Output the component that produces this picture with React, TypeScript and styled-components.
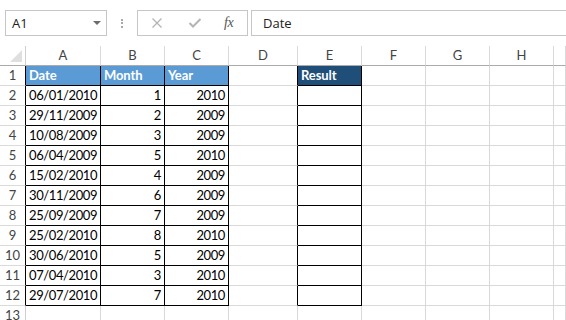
import React from "react";
import styled, { createGlobalStyle } from "styled-components";

const Global = createGlobalStyle`
  html, body { margin: 0; padding: 0; background: #ffffff; }
  body { width: 566px; height: 320px; overflow: hidden; }
  * { box-sizing: border-box; }
`;

const Page = styled.div`
  width: 566px;
  height: 320px;
  overflow: hidden;
  background: #fff;
  display: flex;
  flex-direction: column;
`;

const FormulaBar = styled.div`
  flex: 0 0 46px;
  height: 46px;
  padding: 10px 0 10px 5px;
  display: flex;
  align-items: stretch;
  font-family: "Open Sans", "Noto Sans", sans-serif;
  font-size: 13px;
  color: #222;
`;

const NameBox = styled.div`
  width: 102px;
  border: 1px solid #c6c6c6;
  display: flex;
  align-items: center;
  justify-content: space-between;
  padding: 0 5px 0 6px;
`;

const DropArrow = styled.span`
  width: 0;
  height: 0;
  border-left: 4px solid transparent;
  border-right: 4px solid transparent;
  border-top: 4px solid #6d6d6d;
`;

const Grip = styled.div`
  width: 30px;
  display: flex;
  flex-direction: column;
  align-items: center;
  justify-content: center;
  gap: 1.5px;
`;

const GripDot = styled.span`
  width: 2px;
  height: 2px;
  background: #a8a8a8;
`;

const ButtonBox = styled.div`
  width: 111px;
  border: 1px solid #c6c6c6;
  display: flex;
  align-items: center;
  padding: 0 0 0 13px;
`;

const IconSlot = styled.span<{ $w: number }>`
  width: ${(p) => p.$w}px;
  display: flex;
  align-items: center;
  justify-content: flex-start;
`;

const Fx = styled.span`
  font-family: "Liberation Serif", serif;
  font-style: italic;
  font-size: 14px;
  color: #555;
  letter-spacing: -0.5px;
`;

const FormulaInput = styled.div`
  flex: 1;
  margin-left: 3px;
  border-top: 1px solid #c6c6c6;
  border-bottom: 1px solid #c6c6c6;
  border-left: 1px solid #c6c6c6;
  display: flex;
  align-items: center;
  padding-left: 11px;
`;

const Sheet = styled.div`
  flex: 0 0 auto;
  display: grid;
  grid-template-columns: 26px 75px 64px 64px 69px 64px 64px 64px 64px 1fr;
  grid-auto-rows: 20px;
  font-family: Lato, "Open Sans", sans-serif;
  font-size: 13px;
  line-height: 19px;
`;

const Corner = styled.div`
  border-right: 1px solid #d0d0d0;
  border-bottom: 1px solid #ababab;
  display: flex;
  align-items: flex-end;
  justify-content: flex-end;
  padding: 0 3px 3px 0;
`;

const CornerTriangle = styled.span`
  width: 0;
  height: 0;
  border-left: 12px solid transparent;
  border-bottom: 12px solid #dfdfdf;
`;

const ColHead = styled.div`
  border-right: 1px solid #dadada;
  border-bottom: 1px solid #ababab;
  color: #444;
  text-align: center;
`;

const RowHead = styled.div<{ $edge: string }>`
  border-right: 1px solid ${(p) => p.$edge};
  border-bottom: 1px solid #dadada;
  color: #444;
  text-align: center;
`;

const Cell = styled.div<{
  $right: string;
  $bottom: string;
  $bg?: string;
  $align?: "left" | "right";
  $bold?: boolean;
}>`
  border-right: 1px solid ${(p) => p.$right};
  border-bottom: 1px solid ${(p) => p.$bottom};
  background: ${(p) => p.$bg || "transparent"};
  color: ${(p) => (p.$bg ? "#fff" : "#000")};
  font-weight: ${(p) => (p.$bold ? 700 : 400)};
  text-align: ${(p) => p.$align || "left"};
  letter-spacing: ${(p) => (p.$bold ? "-0.1px" : "-0.4px")};
  padding: 0 3px 0 3px;
  white-space: nowrap;
  overflow: hidden;
`;

const GRID = "#d9d9d9";
const BLACK = "#000";
const BLUE = "#5b9bd5";
const DARK = "#1f4e78";

const rows: [string, string, string][] = [
  ["06/01/2010", "1", "2010"],
  ["29/11/2009", "2", "2009"],
  ["10/08/2009", "3", "2009"],
  ["06/04/2009", "5", "2010"],
  ["15/02/2010", "4", "2009"],
  ["30/11/2009", "6", "2009"],
  ["25/09/2009", "7", "2009"],
  ["25/02/2010", "8", "2010"],
  ["30/06/2010", "5", "2009"],
  ["07/04/2010", "3", "2010"],
  ["29/07/2010", "7", "2010"],
];

const cols = ["A", "B", "C", "D", "E", "F", "G", "H", ""];

const XIcon = () => (
  <svg width="12" height="12" viewBox="0 0 12 12">
    <path d="M1.5 1.5 L10.5 10.5 M10.5 1.5 L1.5 10.5" stroke="#b4b4b4" strokeWidth="1.3" fill="none" />
  </svg>
);

const CheckIcon = () => (
  <svg width="14" height="12" viewBox="0 0 14 12">
    <path d="M1.5 6 L5 9.5 L12.5 2" stroke="#b4b4b4" strokeWidth="2" fill="none" />
  </svg>
);

const Blank = ({ right = GRID, bottom = GRID }: { right?: string; bottom?: string }) => (
  <Cell $right={right} $bottom={bottom} />
);

export default function App() {
  return (
    <Page>
      <Global />
      <FormulaBar>
        <NameBox>
          <span>A1</span>
          <DropArrow />
        </NameBox>
        <Grip>
          <GripDot />
          <GripDot />
          <GripDot />
        </Grip>
        <ButtonBox>
          <IconSlot $w={37}>
            <XIcon />
          </IconSlot>
          <IconSlot $w={36}>
            <CheckIcon />
          </IconSlot>
          <IconSlot $w={20}>
            <Fx>fx</Fx>
          </IconSlot>
        </ButtonBox>
        <FormulaInput>Date</FormulaInput>
      </FormulaBar>
      <Sheet>
        <Corner>
          <CornerTriangle />
        </Corner>
        {cols.map((c, i) => (
          <ColHead key={i}>{c}</ColHead>
        ))}

        <RowHead $edge={BLACK}>1</RowHead>
        <Cell $right={BLACK} $bottom={BLACK} $bg={BLUE} $bold>Date</Cell>
        <Cell $right={BLACK} $bottom={BLACK} $bg={BLUE} $bold>Month</Cell>
        <Cell $right={BLACK} $bottom={BLACK} $bg={BLUE} $bold>Year</Cell>
        <Blank right={BLACK} />
        <Cell $right={BLACK} $bottom={BLACK} $bg={DARK} $bold>Result</Cell>
        <Blank />
        <Blank />
        <Blank />
        <Blank />

        {rows.map((r, i) => (
          <React.Fragment key={i}>
            <RowHead $edge={BLACK}>{i + 2}</RowHead>
            <Cell $right={BLACK} $bottom={BLACK}>{r[0]}</Cell>
            <Cell $right={BLACK} $bottom={BLACK} $align="right">{r[1]}</Cell>
            <Cell $right={BLACK} $bottom={BLACK} $align="right">{r[2]}</Cell>
            <Blank right={BLACK} />
            <Cell $right={BLACK} $bottom={BLACK} />
            <Blank />
            <Blank />
            <Blank />
            <Blank />
          </React.Fragment>
        ))}

        <RowHead $edge="#d0d0d0">13</RowHead>
        {cols.map((_, i) => (
          <Blank key={i} />
        ))}
      </Sheet>
    </Page>
  );
}
